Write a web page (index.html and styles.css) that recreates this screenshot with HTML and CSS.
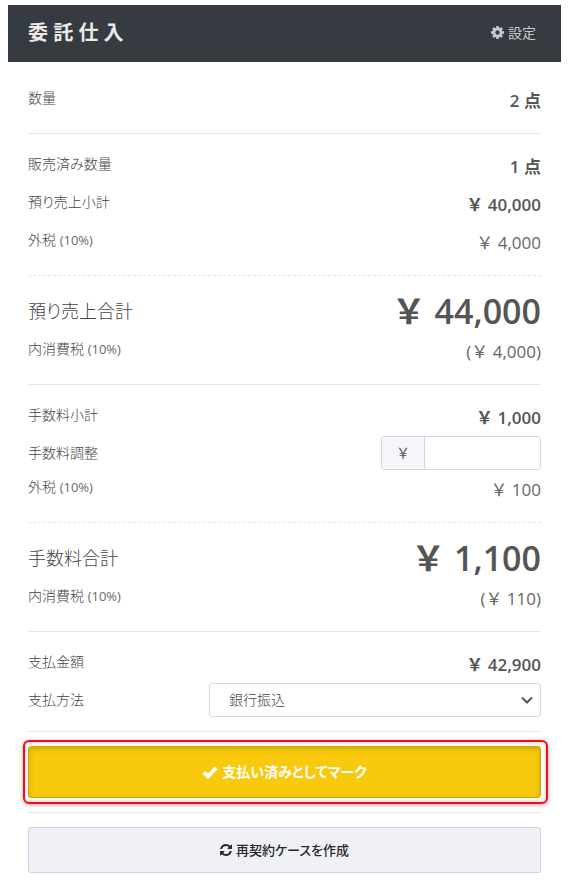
FILE: index.html
```html
<!DOCTYPE html>
<html lang="ja">
<head>
<meta charset="utf-8">
<meta name="viewport" content="width=device-width, initial-scale=1">
<title>委託仕入</title>
<link rel="stylesheet" href="styles.css">
</head>
<body>
<main class="card">
  <header class="card-header">
    <h1 class="title">委 託 仕 入</h1>
    <a class="settings" href="#settings">
      <svg class="icon-gear" viewBox="0 0 1536 1536" aria-hidden="true"><path d="M1024 768q0-106-75-181t-181-75-181 75-75 181 75 181 181 75 181-75 75-181zm512-109v222q0 12-8 23t-20 13l-185 28q-19 54-39 91 35 50 107 138 10 12 10 25t-9 23q-27 37-99 108t-94 71q-12 0-26-9l-138-108q-44 23-91 38-16 136-29 186-7 28-36 28H657q-14 0-24.500-8.500T621 1506l-28-184q-49-16-90-37l-141 107q-10 9-25 9-14 0-25-11-126-114-165-168-7-10-7-23 0-12 8-23 15-21 51-66.500t54-70.500q-27-50-41-99L29 913q-13-2-21-12.500T0 877V655q0-12 8-23t19-13l186-28q14-46 39-92-40-57-107-138-10-12-10-24 0-10 9-23 26-36 98.500-107.500T337 135q13 0 26 10l138 107q44-23 91-38 16-136 29-186 7-28 36-28h222q14 0 24.500 8.500T915 30l28 184q49 16 90 37l142-107q9-9 24-9 13 0 25 10 129 119 165 170 7 8 7 22 0 12-8 23-15 21-51 66.500t-54 70.500q26 50 41 98l183 28q13 2 21 12.500t8 23.500z"/></svg>
      <span>設定</span>
    </a>
  </header>

  <div class="card-body">
    <section class="group">
      <div class="row"><span class="label">数量</span><span class="value strong">2 点</span></div>
    </section>

    <section class="group group-dashed">
      <div class="row"><span class="label">販売済み数量</span><span class="value strong">1 点</span></div>
      <div class="row"><span class="label">預り売上小計</span><span class="value strong">&#xFFE5; 40,000</span></div>
      <div class="row"><span class="label">外税 <span class="rate">(10%)</span></span><span class="value">&#xFFE5; 4,000</span></div>
    </section>

    <section class="group">
      <div class="row row-total"><span class="label">預り売上合計</span><span class="value">&#xFFE5; 44,000</span></div>
      <div class="row"><span class="label">内消費税 <span class="rate">(10%)</span></span><span class="value">(&#xFFE5; 4,000)</span></div>
    </section>

    <section class="group group-dashed">
      <div class="row"><span class="label">手数料小計</span><span class="value strong">&#xFFE5; 1,000</span></div>
      <div class="row row-field">
        <label class="label" for="adjust">手数料調整</label>
        <div class="money">
          <span class="money-unit">&#xFFE5;</span>
          <input class="money-input" id="adjust" type="text" inputmode="numeric">
        </div>
      </div>
      <div class="row"><span class="label">外税 <span class="rate">(10%)</span></span><span class="value">&#xFFE5; 100</span></div>
    </section>

    <section class="group">
      <div class="row row-total"><span class="label">手数料合計</span><span class="value">&#xFFE5; 1,100</span></div>
      <div class="row"><span class="label">内消費税 <span class="rate">(10%)</span></span><span class="value">(&#xFFE5; 110)</span></div>
    </section>

    <section class="group">
      <div class="row"><span class="label">支払金額</span><span class="value strong">&#xFFE5; 42,900</span></div>
      <div class="row row-field">
        <label class="label" for="method">支払方法</label>
        <div class="select-wrap">
          <select class="select" id="method"><option>銀行振込</option></select>
          <svg class="icon-chevron" viewBox="0 0 12 8" aria-hidden="true"><path d="M1 1.500l5 5 5-5"/></svg>
        </div>
      </div>
    </section>

    <section class="group group-action">
      <div class="highlight">
        <button class="button button-primary" type="button">
          <svg class="icon-check" viewBox="0 0 16 14" aria-hidden="true"><path d="M2 7.300l4 4L14 3"/></svg>
          <span>支払い済みとしてマーク</span>
        </button>
      </div>
    </section>

    <section class="group group-action group-last">
      <button class="button button-secondary" type="button">
        <svg class="icon-refresh" viewBox="0 0 1536 1536" aria-hidden="true"><path d="M1511 928q0 5-1 7-64 268-268 434.500T764 1536q-146 0-282.500-55T238 1324l-129 129q-19 19-45 19t-45-19-19-45V960q0-26 19-45t45-19h448q26 0 45 19t19 45-19 45l-137 137q71 66 161 102t187 36q134 0 250-65t186-179q11-17 53-117 8-23 30-23h192q13 0 22.500 9.500t9.500 22.500zm25-800v448q0 26-19 45t-45 19h-448q-26 0-45-19t-19-45 19-45l138-138Q969 256 768 256q-134 0-250 65T332 500q-11 17-53 117-8 23-30 23H50q-13 0-22.500-9.500T18 608v-7q65-268 270-434.500T768 0q146 0 284 55.500T1297 212l130-129q19-19 45-19t45 19 19 45z"/></svg>
        <span>再契約ケースを作成</span>
      </button>
    </section>
  </div>
</main>
</body>
</html>
```
FILE: styles.css
```css
* {
  box-sizing: border-box;
}

body {
  margin: 5px 11px 0 8px;
  background: #fff;
  color: #555;
  font-family: "Open Sans", "Noto Sans CJK JP", sans-serif;
  font-size: 14px;
  line-height: 20px;
}

button,
input,
select {
  font: inherit;
  color: inherit;
}

.card {
  background: #fff;
  box-shadow: 0 0 1px #ddd;
}

.card-header {
  display: flex;
  align-items: center;
  justify-content: space-between;
  height: 57px;
  padding: 0 25px 2px 20px;
  background: #363a41;
  color: #e9e9e9;
}

.title {
  margin: 0;
  font-size: 20px;
  font-weight: 600;
}

.settings {
  display: flex;
  align-items: center;
  gap: 4px;
  color: #c8c9cb;
  text-decoration: none;
}

.icon-gear {
  width: 13px;
  height: 13px;
  fill: currentColor;
}

.card-body {
  padding: 6px 20px 9px;
}

.group {
  padding: 13px 0 14px;
  border-bottom: 1px solid #e4e5ea;
}

.group-dashed {
  border-bottom-style: dashed;
}

.group-action {
  padding-top: 14px;
}

.group-last {
  padding-bottom: 0;
  border-bottom: 0;
}

.row {
  display: flex;
  align-items: center;
  justify-content: space-between;
  height: 38px;
}

.label {
  padding-bottom: 4px;
  color: #444;
  font-size: 14px;
  font-weight: 300;
  font-feature-settings: "palt";
}

.rate {
  color: #6a6a6a;
  font-size: 13px;
  font-weight: 400;
}

.value {
  padding-top: 2px;
  color: #666;
  font-size: 17px;
  font-weight: 400;
}

.strong {
  color: #555;
  font-weight: 600;
}

.row-total {
  height: 43px;
}

.row-total .label {
  padding: 0;
  font-size: 18px;
}

.row-total .value {
  padding: 0;
  color: #555;
  font-size: 34px;
  font-weight: 600;
}

.row-field {
  height: 34px;
}

.row-field .label {
  padding: 0;
}

.money {
  display: flex;
  width: 160px;
  height: 34px;
  border: 1px solid #d3d7e3;
  border-radius: 3px;
  overflow: hidden;
}

.money-unit {
  display: flex;
  align-items: center;
  justify-content: center;
  width: 43px;
  border-right: 1px solid #d3d7e3;
  background: #f5f6f9;
}

.money-input {
  flex: 1;
  min-width: 0;
  padding: 0 10px;
  border: 0;
  background: #fff;
}

.select-wrap {
  position: relative;
  width: 332px;
  height: 34px;
}

.select {
  width: 100%;
  height: 100%;
  padding: 0 32px 0 19px;
  border: 1px solid #d3d7e3;
  border-radius: 3px;
  background: #fff;
  color: #444;
  font-weight: 300;
  appearance: none;
}

.icon-chevron {
  position: absolute;
  top: 13px;
  right: 8px;
  width: 12px;
  height: 8px;
  fill: none;
  stroke: #555;
  stroke-width: 2;
  pointer-events: none;
}

.button {
  display: flex;
  align-items: center;
  justify-content: center;
  gap: 4px;
  width: 100%;
  border-radius: 3px;
  font-feature-settings: "palt";
}

.button-primary {
  height: 52px;
  border: 1px solid #cfa500;
  background: #f8c90c;
  box-shadow: inset 0 2px 5px rgba(120, 90, 0, 0.3);
  color: #fff;
  font-size: 14px;
  font-weight: 700;
}

.button-secondary {
  height: 46px;
  border: 1px solid #ccd1de;
  background: #f0f1f6;
  color: #26282c;
  font-size: 13px;
  font-weight: 500;
}

.highlight {
  position: relative;
}

.highlight::after {
  content: "";
  position: absolute;
  inset: -6px -7px -6px -5px;
  border: 2px solid #fa0a12;
  border-radius: 6px;
  box-shadow: 0 1px 4px rgba(0, 0, 0, 0.35), inset 0 0 4px rgba(0, 0, 0, 0.25);
  pointer-events: none;
}

.icon-check {
  width: 16px;
  height: 14px;
  fill: none;
  stroke: currentColor;
  stroke-width: 4;
}

.icon-refresh {
  width: 12px;
  height: 12px;
  fill: currentColor;
}
```
